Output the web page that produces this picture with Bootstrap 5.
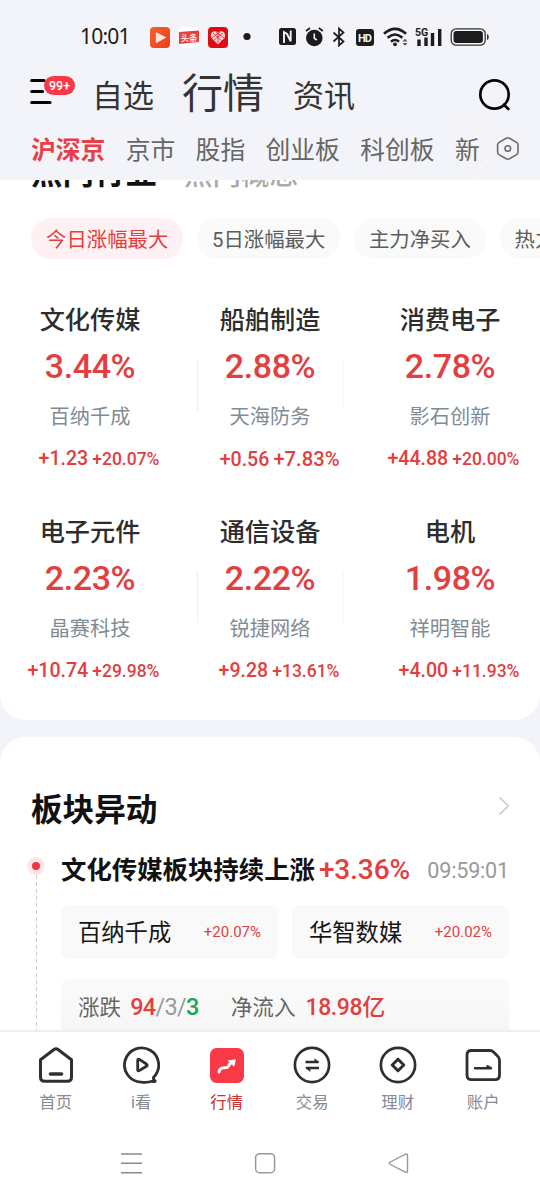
<!DOCTYPE html>
<html lang="zh-CN">
<head>
<meta charset="utf-8">
<meta name="viewport" content="width=device-width, initial-scale=1">
<title>行情</title>
<link rel="stylesheet" href="https://cdn.jsdelivr.net/npm/bootstrap@5.3.0/dist/css/bootstrap.min.css">
<style>
:root{--up:#e2403f;--page:#f3f4f9}
body{background:var(--page);font-family:Roboto,"Noto Sans CJK SC",sans-serif;color:#2d2d2d;line-height:1}
.phone{width:540px;height:1200px}
.up{color:var(--up)}
svg{display:block;flex:none}
/* status bar */
.status{display:grid;grid-template-columns:70px 28px 30px 34px 37px 26px 26px 24px 28px 32px 35px 40px;padding:14px 0 0 80px;height:60px;align-items:center}
.clock{font:400 21px/42px "Noto Sans",sans-serif;letter-spacing:-.8px;color:#1a1a1a;margin-top:-2px}
/* header */
.heads{height:66px;padding-left:30px}
.heads a{font-size:31px;line-height:50px;color:#333;text-decoration:none}
.heads .big{font-size:41px}
.menu-btn{width:46px;height:34px}
.count{right:1px;top:0;width:31px;height:19px;border-radius:10px;background:#f93a46;color:#fff;font:500 12.5px/19px Roboto,sans-serif;text-align:center}
.tabs{height:54px;padding:0 0 0 31px;font-size:24.8px;line-height:49px;color:#666;gap:20.3px}
.tabs .on{color:#e83e48;font-weight:700}
.cut{width:26px;overflow:hidden;white-space:nowrap;background:linear-gradient(90deg,#f2f3f7,#f5f5f8)}
/* panels */
.panel{background:#fff}
.first{height:540px;border-radius:0 0 26px 26px}
.peek{height:38px;padding-left:31px;overflow:hidden}
.peek b{font-size:31.5px;line-height:32px;margin-top:-22px;color:#111}
.peek i{font-style:normal;font-size:28.5px;line-height:30px;margin:-19px 0 0 27px;color:#aaa;font-weight:500}
.chips{gap:13.6px;padding-left:31px;height:41px;overflow:hidden}
.chip{border-radius:21px;background:#fafafa;color:#5d5d5d;font-size:20.4px;line-height:44px;height:41px;padding:0 15px;white-space:nowrap;flex:none}
.chip.on{background:#fff1f3;color:var(--up)}
.boards{display:grid;grid-template-columns:repeat(3,180px);grid-auto-rows:211.5px;margin-top:41px}
.board{text-align:center;position:relative}
.b-name{font-size:25.2px;line-height:42px;font-weight:500}
.b-pct{font-size:34px;line-height:40px;font-weight:500;margin-top:4px;letter-spacing:-.4px}
.b-stock{font-size:20.2px;line-height:32px;color:#818b94;margin-top:15px}
.b-chg{font-size:19.6px;line-height:24px;font-weight:500;margin-top:14px;padding-right:20.5px;text-align:right;white-space:nowrap}
.b-chg small{font-size:17.5px;margin-left:4px;letter-spacing:0}
.rule::after{content:"";position:absolute;top:60px;height:51px;width:1px;background:#eee;left:197px}
.rule2::after{left:163px;background:#f6f6f6}
.second{margin-top:17px;height:293px;border-radius:26px 26px 0 0;padding:47px 31px 0;overflow:hidden;background:#fff}
.sec-title{font-size:31.6px;line-height:50px;font-weight:700;color:#111;position:relative;top:1.5px}
.rail{width:30px;flex:none}
.dot{width:18px;height:18px;border-radius:50%;background:#fde6e8;margin:12px 0 0 -4px;padding:5px}
.dot::before{content:"";display:block;width:8px;height:8px;border-radius:50%;background:#f33342}
.dash{width:1px;height:170px;margin-left:5px;background:repeating-linear-gradient(#ccc 0 4px,transparent 4px 7px)}
.ev{height:57px;line-height:44px;margin-top:-2px;white-space:nowrap}
.ev b{font-size:25.4px;color:#111}
.ev .p{font-size:28px;font-weight:500;margin-left:4px;letter-spacing:-.1px}
.ev .t{font-size:21.6px;color:#999;letter-spacing:-.2px;line-height:46px}
.tile{background:#f9f9f9;border-radius:8px;height:54px;width:217px;padding:0 17px}
.tile span:first-child{font-size:23.3px;line-height:54px;padding-top:2px;color:#161616}
.tile .up{font-size:15px}
.sum{background:linear-gradient(#f9f9f9 40%,#f5f5f5);border-radius:8px 8px 0 0;height:60px;padding-left:17px;margin-top:20px;font-size:21.6px;line-height:57px;color:#666;white-space:nowrap}
/* bottom bars */
.dock{height:170px;border-top:2px solid #efefef;background:#fff}
.items{padding:14px 13px 0;height:100px}
.item{width:85.5px;font-size:16.4px;line-height:28px;color:#858a94;text-align:center;text-decoration:none}
.item svg{margin:0 auto 5px}
.item.on{color:#c8322f}
.sys{padding:19px 0 0 120px;gap:112px}
</style>
</head>
<body>
<div class="phone d-flex flex-column overflow-hidden">
<header>
 <div class="status">
  <span class="clock">10:01</span>
  <svg width="20" height="21"><defs><linearGradient id="g" x2="1" y2="1"><stop stop-color="#f7612c"/><stop offset="1" stop-color="#ec3c20"/></linearGradient></defs><rect width="20" height="21" rx="4" fill="url(#g)"/><path d="M6.3 5.8L15.5 10.5L6.3 15.6Z" fill="#ffe5dc" stroke="#ffe5dc" stroke-linejoin="round"/></svg>
  <svg width="22" height="21"><rect x="1" width="20" height="21" rx="5" fill="#fff"/><path d="M1 5L21 3.5V15L1 17Z" fill="#e5433f"/><text x="11" y="13.6" text-anchor="middle" font-size="8.4" font-weight="500" fill="#fff">头条</text></svg>
  <svg width="20" height="21"><rect width="20" height="21" rx="4" fill="#e00b14"/><path d="M10 17.5L3.5 11C1 7 5.5 2 10 5.5C14.5 2 19 7 16.5 11Z" fill="#fbd5d5"/><path d="M5 6L14 14M8 5L16 11M15 6L6 13M12 5L4 11M10 6V16" stroke="#e00b14" stroke-width=".7"/></svg>
  <svg width="10" height="20"><circle cx="5" cy="9.5" r="3.6" fill="#1c1c1c"/></svg>
  <svg width="18" height="18"><rect width="17" height="17" rx="2.5" fill="#1c1c1c"/><path d="M5 15V4.2L8 6L11.7 13.2V2.5" fill="none" stroke="#f3f4f9" stroke-width="1.9"/></svg>
  <svg width="19" height="20"><circle cx="9.3" cy="11" r="8.3" fill="#1c1c1c"/><path d="M1 4L5 1M17.8 4L13.8 1" stroke="#1c1c1c" stroke-width="1.7"/><path d="M9.3 6.5V11.3L11.8 13" fill="none" stroke="#f3f4f9" stroke-width="1.6"/></svg>
  <svg width="16" height="20"><path d="M2.5 5.5L12.5 14.5L8 18.5V1.5L12.5 5.5L2.5 14.5" fill="none" stroke="#1c1c1c" stroke-width="1.7"/></svg>
  <svg width="19" height="17" class="mt-0"><rect x="1" width="18" height="17" rx="3" fill="#1c1c1c"/><text x="10" y="12.6" text-anchor="middle" font-size="11" font-weight="700" fill="#f3f4f9" textLength="14">HD</text></svg>
  <svg width="26" height="20"><g fill="none" stroke="#1c1c1c" stroke-width="2.6"><path d="M1 6.8Q12 -3 23 6.8"/><path d="M4.6 10.8Q12 4.2 19.4 10.8"/><path d="M8 14.7Q12 11.3 16 14.7"/></g><circle cx="12" cy="17.3" r="1.9" fill="#1c1c1c"/><path d="M19.5 14.5L22 11.8L24.5 14.5ZM19.5 16L22 18.7L24.5 16Z" fill="#555"/></svg>
  <svg width="28" height="20"><text x="0" y="8.7" font-size="10.5" font-weight="700" fill="#1c1c1c">5G</text><path d="M4 12.5V19M11 10.5V19M17.5 6V19M24.7 2V19" stroke="#1c1c1c" stroke-width="3.4"/></svg>
  <svg width="40" height="20"><rect x="1.2" y="1.8" width="34" height="16.4" rx="5" fill="none" stroke="#333" stroke-width="1.3"/><rect x="3.5" y="4.1" width="29.4" height="11.8" rx="2.8" fill="#1c1c1c"/><path d="M37 7V13.3Q38.8 12.5 38.8 10T37 7" fill="#333"/></svg>
 </div>
 <div class="heads d-flex align-items-center">
  <div class="menu-btn position-relative" style="margin-top:-1px">
   <svg width="24" height="34" stroke="#050505" stroke-width="3.2" stroke-linecap="round"><path d="M1.7 4.5H14M1.7 15.5H12.5M1.7 26.5H20"/></svg>
   <span class="count position-absolute">99+</span>
  </div>
  <a href="#" style="margin:8px 0 0 16px">自选</a>
  <a href="#" class="big" style="margin:2px 0 0 28px">行情</a>
  <a href="#" style="margin:8px 0 0 29px">资讯</a>
  <svg width="34" height="34" class="ms-auto" style="margin:4px 29.5px 0 0"><g fill="none" stroke="#050505" stroke-width="2.7" stroke-linecap="round"><circle cx="17.5" cy="16.5" r="14.2"/><path d="M27 26.8L31.3 31"/></g></svg>
 </div>
 <nav class="tabs d-flex">
  <span class="on">沪深京</span><span>京市</span><span>股指</span><span>创业板</span><span>科创板</span><span class="cut">新股</span>
  <svg width="24" height="26" style="margin:10px 0 0 -5px" fill="none" stroke="#6c6c6c" stroke-width="1.6" stroke-linejoin="round"><path d="M10.2 2.2Q11.8 1.4 13.4 2.2L20.6 6.4Q22 7.4 22 9V16Q22 17.8 20.6 18.6L13.4 22.8Q11.8 23.6 10.2 22.8L3 18.6Q1.6 17.8 1.6 16V9Q1.6 7.4 3 6.4Z"/><circle cx="11.8" cy="12.5" r="2.8"/></svg>
 </nav>
</header>
<main class="flex-shrink-0 overflow-hidden" style="height:850px">
 <section class="panel first">
  <div class="peek d-flex align-items-start"><b>热门行业</b><i>热门概念</i></div>
  <div class="chips d-flex"><span class="chip on">今日涨幅最大</span><span class="chip">5日涨幅最大</span><span class="chip">主力净买入</span><span class="chip">热力图</span></div>
  <div class="boards">
   <div class="board rule"><div class="b-name">文化传媒</div><div class="b-pct up">3.44%</div><div class="b-stock">百纳千成</div><div class="b-chg up">+1.23<small class="fw-medium">+20.07%</small></div></div>
   <div class="board rule rule2"><div class="b-name">船舶制造</div><div class="b-pct up">2.88%</div><div class="b-stock">天海防务</div><div class="b-chg up">+0.56<small style="font-size:20.2px">+7.83%</small></div></div>
   <div class="board"><div class="b-name">消费电子</div><div class="b-pct up">2.78%</div><div class="b-stock">影石创新</div><div class="b-chg up">+44.88<small>+20.00%</small></div></div>
   <div class="board rule"><div class="b-name">电子元件</div><div class="b-pct up">2.23%</div><div class="b-stock">晶赛科技</div><div class="b-chg up">+10.74<small>+29.98%</small></div></div>
   <div class="board rule rule2"><div class="b-name">通信设备</div><div class="b-pct up">2.22%</div><div class="b-stock">锐捷网络</div><div class="b-chg up">+9.28<small>+13.61%</small></div></div>
   <div class="board"><div class="b-name">电机</div><div class="b-pct up">1.98%</div><div class="b-stock">祥明智能</div><div class="b-chg up">+4.00<small>+11.93%</small></div></div>
  </div>
 </section>
 <section class="second">
  <div class="d-flex justify-content-between align-items-center"><span class="sec-title">板块异动</span><svg width="12" height="20" style="margin:-7px -1px 0 0" fill="none" stroke="#c9c9c9" stroke-width="1.6"><path d="M1.5 1.5L10.3 10L1.5 18.5"/></svg></div>
  <div class="d-flex" style="margin-top:-10px">
   <div class="rail" style="padding-top:21px"><div class="dot"></div><div class="dash"></div></div>
   <div class="flex-shrink-0" style="width:448px;padding-top:26px">
    <div class="ev d-flex"><b>文化传媒板块持续上涨</b><span class="p up">+3.36%</span><span class="t ms-auto">09:59:01</span></div>
    <div class="d-flex justify-content-between"><div class="tile d-flex justify-content-between align-items-center"><span>百纳千成</span><span class="up">+20.07%</span></div><div class="tile d-flex justify-content-between align-items-center"><span>华智数媒</span><span class="up">+20.02%</span></div></div>
    <div class="sum d-flex"><span>涨跌</span><span style="margin-left:9px;font-size:23.5px;letter-spacing:-.7px"><span class="up fw-medium">94</span><span style="color:#999">/3/</span><span class="fw-medium" style="color:#14a560">3</span></span><span style="margin-left:32px">净流入</span><span class="up fw-medium" style="margin-left:10px;font-size:23px;letter-spacing:-.4px">18.98亿</span></div>
   </div>
  </div>
 </section>
</main>
<footer class="dock flex-shrink-0">
 <nav class="items d-flex">
  <a class="item" href="#"><svg width="38" height="38" fill="none" stroke="#2f2f2f" stroke-width="3" stroke-linejoin="round" stroke-linecap="round"><path d="M3.5 13.7L17 3.5Q19 2 21 3.5L34.5 13.7V31Q34.5 35.3 30.5 35.3H7.5Q3.5 35.3 3.5 31Z"/><path d="M13.5 28H24.5" stroke-width="3.6"/></svg>首页</a>
  <a class="item" href="#"><svg width="38" height="38" fill="none" stroke="#2f2f2f" stroke-width="2.8" stroke-linejoin="round" stroke-linecap="round"><path d="M31.8 31A17.1 17.1 0 1 0 19 36.1Q26 36.8 30 35.3Q34.6 36 32.6 34.4Q30.8 33 31.8 31"/><path d="M15.7 14.3V23.7Q15.7 25.5 17.3 24.6L24.4 20.3Q26 19.2 24.4 18L17.3 13.4Q15.7 12.5 15.7 14.3Z"/></svg>i看</a>
  <a class="item on" href="#"><svg width="38" height="38"><rect x="2" y="2" width="34" height="35" rx="6.5" fill="#fa3947"/><path d="M11 26Q11.5 22.3 15 21.8L18.2 21.6Q20.5 21.5 21.4 18.4L24 16.3" fill="none" stroke="#fff" stroke-width="2.8" stroke-linecap="round" stroke-linejoin="round"/><path d="M19.6 14.5L28 13.3L26.2 20.8Z" fill="#fff"/></svg>行情</a>
  <a class="item" href="#"><svg width="38" height="38" fill="none" stroke="#2f2f2f" stroke-width="2.7"><circle cx="19" cy="19" r="17.1"/><path d="M12.5 16H25.5M26 22H13" stroke-width="2.4"/><path d="M21.5 12.2L26.5 16.5H21.5ZM17.3 26L12 21.5H17.3Z" fill="#2f2f2f" stroke="none"/></svg>交易</a>
  <a class="item" href="#"><svg width="38" height="38" fill="none" stroke="#2f2f2f" stroke-width="2.7"><circle cx="19" cy="19" r="17.1"/><path d="M19 13.2L24.8 19L19 24.8L13.2 19Z" stroke-width="3" stroke-linejoin="round"/></svg>理财</a>
  <a class="item" href="#"><svg width="38" height="38" fill="none" stroke="#2f2f2f" stroke-width="2.8" stroke-linecap="round" stroke-linejoin="round"><path d="M7.5 4.5H26Q28 4.5 29.5 6L33.5 10Q35.5 11.8 35.5 14V29Q35.5 33.7 31 33.7H7.5Q3 33.7 3 29V9Q3 4.5 7.5 4.5Z"/><path d="M11 22.3H27L23.5 20.3" stroke-width="2.4"/></svg>账户</a>
 </nav>
 <div class="sys d-flex" >
  <svg width="22" height="24" stroke="#8a8a8a" stroke-width="1.6"><path d="M1 3H22M1 12.3H22M1 21.7H22"/></svg>
  <svg width="22" height="24" fill="none" stroke="#999" stroke-width="1.5"><rect x="1.6" y="2.7" width="19" height="19" rx="4"/></svg>
  <svg width="22" height="24" fill="none" stroke="#999" stroke-width="1.4" stroke-linejoin="round"><path d="M2.3 11L17.5 3.2Q19.5 2.5 19.5 4.5V20Q19.5 22 17.5 21.2L2.3 13.5Q.3 12.2 2.3 11Z"/></svg>
 </div>
</footer>
</div>
<script src="https://cdn.jsdelivr.net/npm/bootstrap@5.3.0/dist/js/bootstrap.bundle.min.js"></script>
</body>
</html>
